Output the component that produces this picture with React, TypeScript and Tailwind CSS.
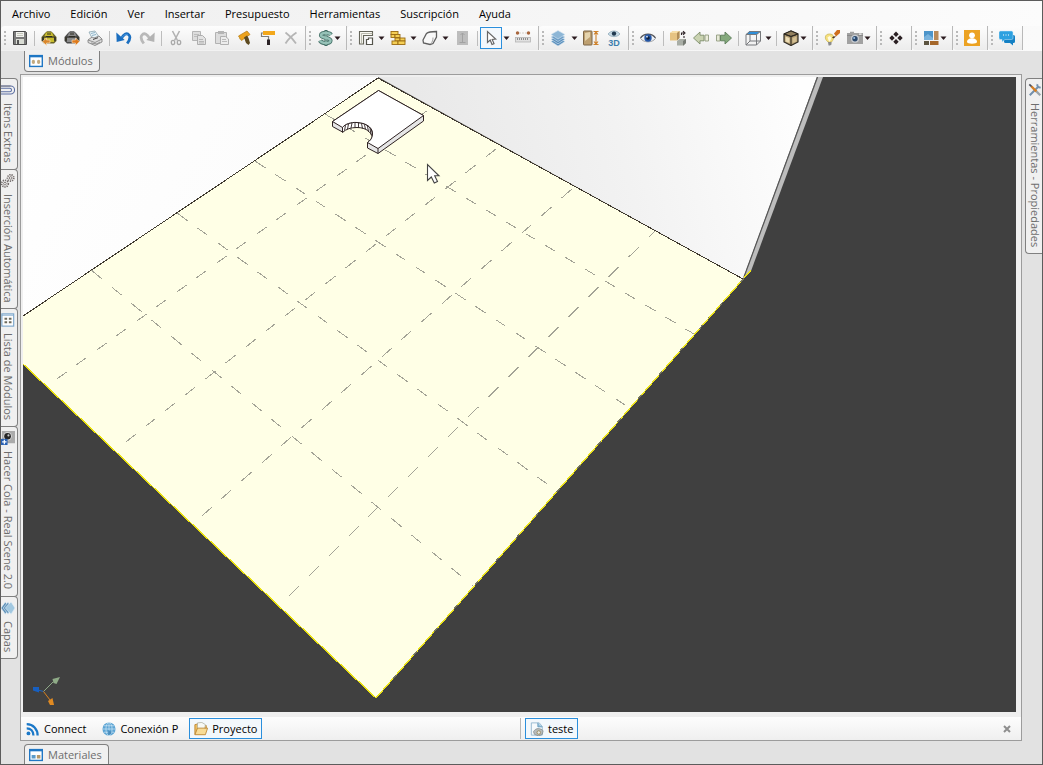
import React from "react";

type Art = () => React.ReactElement;

const Svg = ({ children, size = "size-4" }: { children: React.ReactNode; size?: string }) => (
  <svg viewBox="0 0 16 16" className={`${size} shrink-0`} fill="none" aria-hidden="true">
    {children}
  </svg>
);

/* ---------- toolbar icons ---------- */

const Save: Art = () => (
  <Svg>
    <path d="M1.5 1.500h12l1 1v12h-13z" fill="#7a7a7a" stroke="#4c4c4c" />
    <rect x="4" y="2" width="8" height="5" fill="#f1f1ee" />
    <path d="M5 3.500h6M5 5.500h6" stroke="#c3c6ba" />
    <rect x="4" y="9" width="8" height="5" fill="#d9dcd4" />
    <rect x="5" y="10" width="2" height="4" fill="#555" />
  </Svg>
);

const Backpack = ({ body, dark, arrow, flip }: { body: string; dark: string; arrow: string; flip?: boolean }) => (
  <Svg>
    <path d="M4 3l2-1.800h4L12 3l3.500 4v4L13 13.500H3L.5 11V7z" fill={dark} />
    <path d="M5 2.500h6l1.500 3.500h-9z" fill={body} />
    <path d="M3 8h10v4H3z" fill={body} />
    <path d="M6 4h4M5 6.500h6" stroke="#2f2d22" strokeWidth="1.200" />
    <path d="M1 7.500l2-1v4l-2 .5zM15 7.500l-2-1v4l2 .5z" fill="#3a382c" />
    <path
      d={flip ? "M15.500 11.500l-4-3.500v2H8v3h3.500v2.500z" : "M1.500 11.500l4-3.500v2H9v3H5.500v2.500z"}
      fill={arrow}
      stroke="#fbe3c4"
      strokeWidth=".6"
    />
  </Svg>
);
const PackIn: Art = () => <Backpack body="#c9bd2e" dark="#6a6526" arrow="#d9862b" />;
const PackOut: Art = () => <Backpack body="#8a8a8a" dark="#4b4b4b" arrow="#dd7a1c" flip />;

const Print: Art = () => (
  <Svg>
    <path d="M2 2l6-1 4 6-6 3z" fill="#e8f3f8" stroke="#8aa4b0" strokeWidth=".8" />
    <path d="M4 3.500l4-1M5 5.500l4-1" stroke="#78a5bd" strokeWidth=".8" />
    <path d="M1 10l4-3 2 1 5-2 3 3v3l-7 3.500-7-3z" fill="#dedede" stroke="#777" strokeWidth=".8" />
    <path d="M1 10l7 2.500L15 9M4 13l6 1 3-2" stroke="#888" strokeWidth=".9" />
    <path d="M6 9.500l5-1.800" stroke="#444" />
  </Svg>
);

const Undo: Art = () => (
  <Svg>
    <path d="M5 9.500C7 4 11 2.500 13 5c1.600 2 .5 5.500-1.800 8.500" stroke="#1b6fc0" strokeWidth="2.800" />
    <path d="M.3 2.500l.4 9.500 8-2z" fill="#1b6fc0" />
    <path d="M6 7.500C8 4.500 10.500 3.600 12 5" stroke="#4c9ae2" />
  </Svg>
);
const Redo: Art = () => (
  <Svg>
    <path d="M11 9.500C9 4 5 2.500 3 5c-1.600 2-.5 5.500 1.800 8.500" stroke="#b9b9b9" strokeWidth="2.800" />
    <path d="M15.700 2.500l-.4 9.500-8-2z" fill="#b3b3b3" />
  </Svg>
);
const Cut: Art = () => (
  <Svg>
    <path d="M4.500 1l5 9.500M11.500 1l-5 9.500" stroke="#b2b2b2" strokeWidth="1.600" />
    <ellipse cx="5" cy="12.500" rx="1.700" ry="2.100" stroke="#a9a9a9" strokeWidth="1.300" />
    <ellipse cx="11" cy="12.500" rx="1.700" ry="2.100" stroke="#a9a9a9" strokeWidth="1.300" />
  </Svg>
);
const Copy: Art = () => (
  <Svg>
    <path d="M1.500 1.500h8v9h-8z" fill="#ddd" stroke="#b5b5b5" />
    <path d="M3 4.500h5M3 6.500h3" stroke="#bdbdbd" />
    <path d="M6.500 5.500h5l3 3v6h-8z" fill="#e2e2e2" stroke="#aeaeae" />
    <path d="M8 9.500h4M8 11.500h5M8 13h5" stroke="#b7b7b7" />
  </Svg>
);
const Paste: Art = () => (
  <Svg>
    <path d="M1.500 2.500h11v11h-11z" fill="#ddd" stroke="#b2b2b2" />
    <path d="M4 1h6v3H4z" fill="#b5b5b5" />
    <path d="M6.500 6.500h5l3 2.500v5.500h-8z" fill="#ececec" stroke="#b0b0b0" />
    <path d="M8 9.500h4M8 11.500h5" stroke="#bbb" />
  </Svg>
);
const Brush: Art = () => (
  <Svg>
    <path d="M1.500 6L10 1l3 3.500-8.500 6z" fill="#eda21c" stroke="#b67a10" strokeWidth=".7" />
    <path d="M7 7.500l3-2 1.500 2.500L13 13l-1.500 2L9 13z" fill="#5d4a1f" />
    <path d="M1.500 6l3 4.500L2.500 9z" fill="#caa043" />
  </Svg>
);
const Roller: Art = () => (
  <Svg>
    <rect x="3" y="1" width="12" height="4" fill="#f3a81c" />
    <path d="M3 3H1.500v3.500h7V10" stroke="#7d7d7d" strokeWidth="1.200" />
    <path d="M7 9.500h3V15H7z" fill="#2a2226" />
  </Svg>
);
const Delete: Art = () => (
  <Svg>
    <path d="M2.500 2.500C6 5 10 9 13 13.500M13.500 2.500C9 5.500 5 9.500 2.500 13.500" stroke="#b5b5b5" strokeWidth="1.800" />
  </Svg>
);
const Dollar: Art = () => (
  <Svg>
    <path d="M9 0v16" stroke="#3f6a62" strokeWidth="3" />
    <path d="M14 4.800C12.500 2.500 4 2 4 5.300 4 8.500 13.500 7 13.500 10.700c0 3.300-9 3-10.500-.2" stroke="#4a756c" strokeWidth="4.200" />
    <path d="M9 1v14" stroke="#9cc3b4" />
    <path d="M14 4.800C12.500 2.500 4 2 4 5.300 4 8.500 13.500 7 13.500 10.700c0 3.300-9 3-10.500-.2" stroke="#96c2b8" strokeWidth="2.400" />
  </Svg>
);
const Walls: Art = () => (
  <Svg>
    <path d="M1.500 14V1.500h13v4h-9V14z" fill="#f8f8f2" stroke="#65655a" strokeWidth="1.100" />
    <path d="M3.500 14V3.500h11" stroke="#a9a99c" strokeWidth=".8" />
    <path d="M8.500 9.500h2v-1.500h4v6.500h-6z" fill="#fff" stroke="#55554c" strokeWidth="1.200" />
  </Svg>
);
const Bricks: Art = () => (
  <Svg>
    <g fill="#f5cf55" stroke="#9a6b12" strokeWidth=".9">
      <rect x="1" y="1.500" width="7" height="3" />
      <rect x="1" y="4.500" width="4" height="3" />
      <rect x="5" y="4.500" width="5" height="3" />
      <rect x="5" y="8" width="5" height="3" />
      <rect x="10" y="8" width="5" height="3" />
      <rect x="2" y="11" width="6" height="3.500" />
      <rect x="8" y="11" width="7" height="3.500" />
    </g>
  </Svg>
);
const Polygon: Art = () => (
  <Svg>
    <path d="M4.500 3.500C6 2 8 1.500 14.500 1.500v5.500l-3.500 6.500-3 1-6.500-1.500-.5-3z" fill="#f8f8f8" stroke="#5f5f5f" strokeWidth="1.300" />
    <path d="M8.500 14c2-2 2.500-4 2.500-6.500" stroke="#8a8a8a" strokeWidth=".8" />
  </Svg>
);
const Panel: Art = () => (
  <Svg>
    <rect x="3" y="1" width="11" height="14" fill="#bdbdbd" />
    <path d="M8.500 3v9M6.500 5l2-2 2 2M5.500 12.500h6" stroke="#a2a2a2" />
  </Svg>
);
const Pointer: Art = () => (
  <Svg>
    <path d="M4.500 1.500v11l2.700-2.500 1.800 4.500 2-.9-1.800-4.100 3.500-.5z" fill="#fff" stroke="#666" strokeWidth="1.200" />
  </Svg>
);
const Ruler: Art = () => (
  <Svg>
    <circle cx="2.500" cy="3" r="1.700" fill="#a9663d" />
    <circle cx="13.500" cy="3" r="1.700" fill="#a9663d" />
    <path d="M4.500 3h1M7.500 3h1M10.500 3h1" stroke="#b5a99d" />
    <rect x=".5" y="7.500" width="15" height="4.500" fill="#e0e0e0" stroke="#b4b4b4" strokeWidth=".8" />
    <path d="M2.500 8v2M4.500 8v2M6.500 8v2M8.500 8v2M10.500 8v2M12.500 8v2" stroke="#777" strokeWidth=".8" />
  </Svg>
);
const Layers: Art = () => (
  <Svg>
    <g stroke="#d5e5f1" strokeWidth=".6">
      <path d="M1 11.500L8 8l7 3.500L8 16z" fill="#5b8fbc" />
      <path d="M1 9.300l7-3.500 7 3.500-7 4.500z" fill="#5b8fbc" />
      <path d="M1 7l7-3.500L15 7l-7 4.500z" fill="#6b9cc6" />
      <path d="M1 4.500L8 .5l7 4L8 9z" fill="#8db6d6" />
    </g>
  </Svg>
);
const DoorHeight: Art = () => (
  <Svg>
    <rect x=".5" y="1" width="8.500" height="14" rx=".6" fill="#bd9f70" stroke="#7b6547" />
    <path d="M2 3l5-1v5L2 11z" fill="#e4d3ad" />
    <path d="M10.500 1.500h5M10.500 14.500h5M13 2v12M11 4.500l2-2.500 2 2.500M11 11.500l2 2.500 2-2.500" stroke="#cf832e" strokeWidth="1.100" />
  </Svg>
);
const View3D: Art = () => (
  <Svg>
    <path d="M2 4c3-4 9-4 12 0-3 3.500-9 3.500-12 0z" fill="#c6d9e4" stroke="#86a3b5" strokeWidth=".7" />
    <circle cx="8" cy="3.600" r="2.200" fill="#20394f" />
    <text x="8" y="15.500" textAnchor="middle" className="fill-[#3b7fae] font-['Liberation_Sans',sans-serif] text-[9px] font-bold">3D</text>
  </Svg>
);
const Eye: Art = () => (
  <Svg>
    <path d="M.5 8.500C4 3 12 3 15.500 8.500 12 13 4 13 .5 8.500z" fill="#eef1f5" stroke="#8d8f94" strokeWidth=".8" />
    <path d="M.5 7.800C4 2.800 12 2.800 15.500 7.800" stroke="#55565c" strokeWidth="1.300" />
    <circle cx="8" cy="8" r="3.700" fill="#2456a6" />
    <circle cx="8" cy="8" r="1.800" fill="#10203c" />
    <circle cx="7" cy="6.700" r=".9" fill="#d8e6fa" />
  </Svg>
);
const Cubes: Art = () => (
  <Svg>
    <path d="M0 3l3-2h6.500v7L7 10.500H0z" fill="#e6c382" />
    <path d="M0 3h7l2.500-2H3z" fill="#f7dfa9" />
    <path d="M7 3l2.500-2v7L7 10.500z" fill="#b08d58" />
    <path d="M7 11l2.500-2H16v4l-2.500 2.500H7z" fill="#a9aea6" />
    <path d="M13 11l3-2v4l-2.500 2.500H13z" fill="#757a73" />
    <path d="M11.500 5V3h2.500M13 1.200l2 1.800-2 1.800M14 6v2" stroke="#30262a" strokeWidth="1.100" />
  </Svg>
);
const Prev: Art = () => (
  <Svg>
    <path d="M.5 8l6.500-6v3.200h4v5.600H7V14z" fill="#c9d2b0" stroke="#7d8d6b" strokeWidth=".9" />
    <path d="M12 5h3.500v6H12z" fill="#eceddc" stroke="#929c80" strokeWidth=".9" />
  </Svg>
);
const Next: Art = () => (
  <Svg>
    <path d="M.5 5H4v6H.5z" fill="#e7ead8" stroke="#929c80" strokeWidth=".9" />
    <path d="M15.500 8L9 2v3.200H4.500v5.600H9V14z" fill="#84a97c" stroke="#5c7c59" strokeWidth=".9" />
  </Svg>
);
const WireCube: Art = () => (
  <Svg>
    <path d="M4.500 1h11L12 4.500H1z" fill="#2f8ed8" />
    <path d="M1 4.500h10.500v10.500H1zM11.500 15l4-4V1.500l-4 3M1 15l4-4h10.500M5 11V4.500M1 4.500l4-3h10.500" stroke="#77797c" />
  </Svg>
);
const SolidCube: Art = () => (
  <Svg>
    <path d="M1 4l7-3 7 3v8l-7 3.500L1 12z" fill="#b29c72" stroke="#2e2a22" strokeWidth="1.200" />
    <path d="M1 4l7-3 7 3-7 2.500z" fill="#93815f" stroke="#2e2a22" />
    <path d="M8 6.500v9M1 4l7 2.500L15 4" stroke="#2e2a22" strokeWidth="1.100" />
    <path d="M2.500 6.500l4 1.400V13l-4-1.500z" fill="#ecdcb4" />
    <path d="M9.500 8l4-1.500v5l-4 1.500z" fill="#d3bf92" />
  </Svg>
);
const BulbBrush: Art = () => (
  <Svg>
    <path d="M4 12C0 9 .5 4 5.500 4c4.500 0 5.500 4 2 8z" fill="#f6e07c" stroke="#cdb95c" strokeWidth=".8" />
    <path d="M3.500 7.500l2-1.500 2 1.500L6 11.500H5z" fill="#fffbe0" />
    <path d="M4 12h3.500v2.500l-1.500 1H4.500z" fill="#8a8a8a" />
    <path d="M9 6.500L8 8l2 .3 2-2z" fill="#4a3322" />
    <path d="M10 3.500L13 0h3v3l-4 3.500z" fill="#cf6f1c" />
  </Svg>
);
const Camera: Art = () => (
  <Svg>
    <path d="M0 3h3V1.800h4V3h9v11H0z" fill="#a2a2a2" />
    <path d="M0 5.500h16" stroke="#8a8a8a" />
    <circle cx="8" cy="8.800" r="4" fill="#c9cdd2" />
    <circle cx="8" cy="8.800" r="2.700" fill="#2d4a6d" />
    <circle cx="7.200" cy="8" r="1" fill="#9cc2e8" />
    <rect x="12" y="3.500" width="2.500" height="1.300" fill="#eee" />
  </Svg>
);
const Diamonds: Art = () => (
  <Svg>
    <path d="M8 1.500l2.700 2.700L8 6.900 5.300 4.200zM4 5.300L6.700 8 4 10.700 1.300 8zM12 5.300L14.700 8 12 10.700 9.300 8zM8 9.100l2.700 2.700L8 14.500l-2.700-2.700z" fill="#2b2023" />
  </Svg>
);
const Materials: Art = () => (
  <Svg>
    <rect x="1" y="1" width="9" height="9" fill="#4c94c9" />
    <rect x="11" y="1" width="4.500" height="9" fill="#b98a58" />
    <rect x="1" y="11" width="5" height="4" fill="#5c5440" />
    <rect x="7" y="11" width="8.500" height="4" fill="#a5672a" />
    <path d="M1 7l4-3 5 4v2H1z" fill="#79b2dc" />
  </Svg>
);
const User: Art = () => (
  <Svg>
    <rect width="16" height="16" fill="#eca222" />
    <circle cx="8" cy="5.300" r="2.900" fill="#fff" />
    <path d="M3 12c0-5 10-5 10 0 0 2.300-10 2.300-10 0z" fill="#fff" />
  </Svg>
);
const Chat: Art = () => (
  <Svg>
    <path d="M5 5h9.500q1.500 0 1.500 1.500v5q0 1.500-1.500 1.500H14v2.500L11 13H6.500Q5 13 5 11.500z" fill="#1480c4" />
    <path d="M1.500 1h11Q14 1 14 2.500v5.500q0 1.500-1.500 1.500H6L3 12V9.500H1.500Q0 9.500 0 8V2.500Q0 1 1.500 1z" fill="#2ba0e0" stroke="#c9e7f8" strokeWidth=".5" />
    <path d="M4 5h1M6.500 5h1M9 5h1" stroke="#fff" />
  </Svg>
);

/* ---------- tab icons ---------- */

const Window: Art = () => (
  <Svg size="size-3.5">
    <rect x=".8" y="1.800" width="14.400" height="12.400" fill="#fff" stroke="#2077c4" strokeWidth="1.600" />
    <path d="M1 3h14" stroke="#2077c4" strokeWidth="1.600" />
    <ellipse cx="5" cy="9" rx="1.900" ry="2.300" fill="#c3aa80" />
    <ellipse cx="11" cy="9" rx="1.900" ry="2.300" fill="#c3aa80" />
  </Svg>
);
const MaterialWindow: Art = () => (
  <Svg size="size-3.5">
    <rect x=".8" y="1.800" width="14.400" height="12.400" fill="#fff" stroke="#2077c4" strokeWidth="1.600" />
    <path d="M1 3h14" stroke="#2077c4" strokeWidth="1.600" />
    <rect x="3" y="8" width="4.500" height="4" fill="#5b9bc9" />
    <rect x="9" y="8" width="4" height="4" fill="#b5986a" />
  </Svg>
);
const Clip: Art = () => (
  <Svg size="size-3.5">
    <path d="M0 3.500h11a3.700 3.700 0 010 9H0M0 6h10a2 2 0 010 4H0" stroke="#5c6fa3" strokeWidth="1.200" />
    <path d="M0 3.500h11" stroke="#77777f" />
  </Svg>
);
const Gears: Art = () => (
  <Svg size="size-3.5">
    <g stroke="#77706f" strokeWidth="2" strokeDasharray="1.500 1">
      <circle cx="11" cy="4.500" r="3.600" />
      <circle cx="4.500" cy="11" r="3.800" />
    </g>
    <circle cx="11" cy="4.500" r="1.500" stroke="#77706f" />
    <circle cx="4.500" cy="11" r="1.500" stroke="#77706f" />
  </Svg>
);
const ListIcon: Art = () => (
  <Svg size="size-3.5">
    <rect x="1" y="1" width="13.500" height="14" fill="#fdfdfd" stroke="#7ba6cc" strokeWidth="1.300" />
    <path d="M1 2.500h13" stroke="#7ba6cc" />
    <path d="M4 6.500h3M9 6.500h3M4 10.500h3M9 10.500h3" stroke="#6d6a5c" strokeWidth="2.400" />
  </Svg>
);
const CameraPlus: Art = () => (
  <Svg size="size-3.5">
    <rect x="1" y="0" width="15" height="14" fill="#ababab" />
    <circle cx="7.500" cy="6" r="4.800" fill="#dadada" />
    <circle cx="7.500" cy="6" r="3.800" fill="#262626" />
    <circle cx="8.500" cy="5" r="1.200" fill="#ccc" />
    <rect x="0" y="9" width="7.500" height="7" fill="#2a62b4" />
    <path d="M3.800 10v5M1.300 12.500h5" stroke="#fff" strokeWidth="1.400" />
  </Svg>
);
const SideLayers: Art = () => (
  <Svg size="size-3.5">
    <g stroke="#e3eef6" strokeWidth=".7">
      <path d="M5 1l-5 7 5 7 4-7z" fill="#5b8eb6" />
      <path d="M8 1L2.500 8 8 15l4-7z" fill="#6b9bc0" />
      <path d="M11.500 1L5 8l6.500 7L16 8z" fill="#a2c8e0" />
    </g>
  </Svg>
);
const Tools: Art = () => (
  <Svg size="size-3.5">
    <path d="M2 14L12 4M11 1.500c-1 2 .5 4 3.500 3.500" stroke="#7390ac" strokeWidth="2.300" />
    <path d="M9 9l5 5" stroke="#9aa3aa" strokeWidth="2.600" />
    <path d="M1.500 1.500L4.500 4.500" stroke="#4f4f57" strokeWidth="2" />
    <path d="M4 4l5.500 5.500" stroke="#d57e23" strokeWidth="2.800" />
  </Svg>
);
const Rss: Art = () => (
  <Svg size="size-3.5">
    <circle cx="2.800" cy="13" r="2.200" fill="#1b78c8" />
    <path d="M.8 7.200c4.500 0 7.700 3.500 7.700 8.300M.8 2.500c7.500 0 12.500 5.500 12.500 13" stroke="#1b78c8" strokeWidth="2.600" />
  </Svg>
);
const Globe: Art = () => (
  <Svg size="size-3.5">
    <circle cx="8" cy="8" r="7.500" fill="#5ba4d4" />
    <ellipse cx="8" cy="8" rx="3.500" ry="7.500" stroke="#cfe7f5" strokeWidth=".8" />
    <path d="M8 .5v15M.5 8h15M2 4.300h12M2 11.700h12" stroke="#cfe7f5" strokeWidth=".8" />
    <path d="M7 9l4 2-1 3-3 1z" fill="#4a8dbd" />
  </Svg>
);
const Folder: Art = () => (
  <Svg size="size-3.5">
    <path d="M1 14V3l4-1 1 2h8v3z" fill="#eebf62" stroke="#bd8631" />
    <path d="M4 1l5-.5L13 3l-1 6H4z" fill="#f7f9f5" stroke="#a9ab9c" strokeWidth=".8" />
    <path d="M1 14.500L4 7h11.500L13 14.500z" fill="#f9dc96" stroke="#bd8631" />
  </Svg>
);
const Doc: Art = () => (
  <Svg size="size-3.5">
    <path d="M1.500 1h9L14 5v10H1.500z" fill="#f6fafc" stroke="#8fb5cd" />
    <path d="M9 1v4.500h5" fill="#9bc3dc" stroke="#5c96bb" />
    <path d="M4 11c3-5 8-4 11-1l-1 4-4 2-5-2z" fill="#b7bbbb" stroke="#808585" strokeWidth=".8" />
    <circle cx="10" cy="12" r="2" fill="#e4e6e3" stroke="#85702f" strokeWidth=".7" />
  </Svg>
);

/* ---------- tool bar parts ---------- */

const Caret = () => (
  <svg viewBox="0 0 7 6" className="h-1.5 w-[7px] shrink-0" aria-hidden="true">
    <path d="M.5 1.500h6L3.500 5z" fill="#2b1b1f" />
  </svg>
);

const Tool = ({ label, art: A, wide }: { label: string; art: Art; wide?: boolean }) => (
  <button type="button" aria-label={label} className={`flex h-[22px] items-center justify-center ${wide ? "w-6" : "w-[23px]"}`}>
    <A />
  </button>
);
const MenuTool = ({ label, art: A }: { label: string; art: Art }) => (
  <button type="button" aria-label={label} className="flex h-[22px] w-[30px] items-center gap-px pl-1">
    <A />
    <Caret />
  </button>
);
const Drop = ({ label }: { label: string }) => (
  <button type="button" aria-label={label} className="flex h-[22px] w-[9px] items-center justify-center">
    <Caret />
  </button>
);
const Sep = () => <span className="mr-[2px] ml-[3px] h-[15px] w-px bg-[#bdbdbd]" />;

const Group = ({ name, children }: { name: string; children: React.ReactNode }) => (
  <div
    role="group"
    aria-label={name}
    className="flex h-6 items-center rounded-l border-r border-[#b9b9b9] bg-linear-to-b from-[#fdfdfd] to-[#ececec] pr-[3px]"
  >
    <span className="flex w-[7px] flex-col items-center gap-[2px]">
      <i className="size-[2px] bg-[#b9b9b9]" />
      <i className="size-[2px] bg-[#b9b9b9]" />
      <i className="size-[2px] bg-[#b9b9b9]" />
      <i className="size-[2px] bg-[#b9b9b9]" />
    </span>
    {children}
  </div>
);

const menus = ["Archivo", "Edición", "Ver", "Insertar", "Presupuesto", "Herramientas", "Suscripción", "Ayuda"];

const sideTabs: { label: string; art: Art }[] = [
  { label: "Itens Extras", art: Clip },
  { label: "Inserción Automática", art: Gears },
  { label: "Lista de Módulos", art: ListIcon },
  { label: "Hacer Cola - Real Scene 2.0", art: CameraPlus },
  { label: "Capas", art: SideLayers },
];

/* ---------- 3D scene ---------- */

const gridLines = [
  [325, 114, 694, 334],
  [255, 161, 625, 405],
  [177, 213, 547, 484],
  [91, 270, 473, 586],
  [56, 379, 427, 110],
  [125, 442, 495, 149],
  [201, 516, 571, 189],
  [288, 596, 654, 231],
];

const Scene = () => (
  <svg
    viewBox="23 77 993 635"
    preserveAspectRatio="xMinYMin slice"
    className="min-h-0 w-full flex-1 bg-[#404040]"
    role="img"
    aria-label="Vista 3D"
  >
    <defs>
      <linearGradient id="wallLeft" x1="0" y1="0" x2="1" y2="0.4">
        <stop offset="0" stopColor="#ffffff" />
        <stop offset="1" stopColor="#fbfbfb" />
      </linearGradient>
      <linearGradient id="wallRight" gradientUnits="userSpaceOnUse" x1="430" y1="150" x2="790" y2="60">
        <stop offset="0" stopColor="#e9e9e9" />
        <stop offset="0.5" stopColor="#f2f2f2" />
        <stop offset="1" stopColor="#fefefe" />
      </linearGradient>
    </defs>
    <path d="M23 77H378V79L23 317z" fill="url(#wallLeft)" />
    <path d="M378 77H817L743 279z" fill="url(#wallRight)" />
    <path d="M817 77H823L751 271L743 279z" fill="#bdbdbd" />
    <path d="M817.500 77L744 277" stroke="#555" strokeWidth="1.200" />
    <path d="M378 78L743 279L751 270L376 698L23 364V316z" fill="#ffffe6" />
    <g shapeRendering="crispEdges" fill="none">
      <path d="M23 316L378 78L743 279" stroke="#403a30" />
      <path d="M23 364L376 698" stroke="#e8e010" strokeWidth="1.300" />
      <path d="M376 698L751 270" stroke="#77775a" strokeWidth="1.300" />
      <path d="M376 698L751 270" stroke="#ebe31c" strokeWidth="1.300" strokeDasharray="26 5" />
    </g>
    <g shapeRendering="crispEdges" transform="translate(0.5 0.3)">
      {gridLines.map(([x1, y1, x2, y2]) => {
        const dash = (10 * Math.hypot(x2 - x1, y2 - y1)) / (x2 - x1);
        return <line key={`${x1}-${y1}`} x1={x1} y1={y1} x2={x2} y2={y2} stroke="#a3a396" strokeDasharray={dash} />;
      })}
    </g>
    <g stroke="#2e2222" strokeLinejoin="round">
      <path d="M378.500 90.500L423.500 115.500V121L378 153.500L367.500 148V142.500C378 136 374 125 357 123C349 122.500 345 125 342.500 128V132L332.500 126.500V121.500z" fill="#e6e6e6" />
      <path d="M342.500 127.500C345 124 351 122 357 122.500C368 123 373.500 129 372.500 138C371.500 132 366 127.500 357 127.500C351 127.500 346 129 342.500 132.500z" fill="#fff" />
      <path d="M378.500 90.500L423.500 115.500L378 148.500L367.500 142.500C370 141 372.500 138 372.500 134C373 129 368 123 357 122.500C351 122 345 124 342.500 127.500L332.500 121.500z" fill="#fff" />
      <path d="M378 148.500V153.500" />
      <path d="M345.500 125.500l-1 5M348.500 124l-1 5M352 123l-1 5M355 122.500v5M358.500 122.500v5M361.500 123.500l1 5M364.500 124.500l1 5M367.500 126l1 6M370 128.500l1 6" strokeWidth=".9" fill="none" />
    </g>
    <path d="M427.500 164.500V180.500L431.300 177L434.300 183L437.500 181.500L434.700 175.800H439z" fill="#fff" stroke="#444" strokeWidth="1.100" />
    <g strokeWidth="1">
      <path d="M43.500 691.500L53 682" stroke="#8fa988" />
      <path d="M60 677l-7.500 2 1 4 3 1z" fill="#8fab87" />
      <path d="M43.500 691.500L38 690" stroke="#1a63c0" />
      <path d="M33 687h6v5.500l-3-1-3-1z" fill="#175fc0" />
      <path d="M43.500 691.500L50 700" stroke="#d8801e" />
      <path d="M48 701l4.500-3L54 705h-4z" fill="#e08a22" />
    </g>
  </svg>
);

export default function App() {
  return (
    <div className="flex h-screen min-h-[720px] flex-col overflow-hidden border border-[#5c5c5c] bg-[#e2e2e2] font-['Open_Sans','Noto_Sans',sans-serif] text-[11px] leading-4 text-black">
      <nav aria-label="Menú principal" className="flex h-[25px] shrink-0 items-center gap-5 bg-linear-to-r from-[#efefef] to-[#fcfcfc] pl-[11px]">
        {menus.map((m) => (
          <button key={m} type="button">
            {m}
          </button>
        ))}
      </nav>

      <div role="toolbar" aria-label="Herramientas" className="flex h-[25px] shrink-0 items-start bg-linear-to-r from-[#f0f0f0] to-[#fafafa]">
        <Group name="Archivo">
          <Tool label="Guardar" art={Save} />
          <Sep />
          <Tool label="Importar módulo" art={PackIn} />
          <Tool label="Exportar módulo" art={PackOut} />
          <Tool label="Imprimir" art={Print} />
          <Sep />
          <Tool label="Deshacer" art={Undo} />
          <Tool label="Rehacer" art={Redo} />
          <Sep />
          <Tool label="Cortar" art={Cut} />
          <Tool label="Copiar" art={Copy} />
          <Tool label="Pegar" art={Paste} />
          <Tool label="Pincel" art={Brush} />
          <Tool label="Rodillo" art={Roller} />
          <Tool label="Eliminar" art={Delete} />
        </Group>
        <Group name="Presupuesto">
          <MenuTool label="Presupuesto" art={Dollar} />
        </Group>
        <Group name="Construcción">
          <Tool label="Paredes" art={Walls} />
          <Drop label="Opciones de paredes" />
          <Tool label="Ladrillos" art={Bricks} />
          <Drop label="Opciones de ladrillos" />
          <Tool label="Polígono" art={Polygon} />
          <Drop label="Opciones de polígono" />
          <Tool label="Panel" art={Panel} wide />
          <Sep />
          <button type="button" aria-label="Seleccionar" aria-pressed="true" className="flex size-[22px] items-center justify-center border border-[#2b8fdc] bg-[#f3f8fc]">
            <Pointer />
          </button>
          <Drop label="Opciones de selección" />
          <Tool label="Medir" art={Ruler} wide />
        </Group>
        <Group name="Capas">
          <Tool label="Capas" art={Layers} wide />
          <Drop label="Opciones de capas" />
          <Tool label="Altura" art={DoorHeight} />
          <Tool label="Vista 3D" art={View3D} />
        </Group>
        <Group name="Vista">
          <Tool label="Ver" art={Eye} wide />
          <Sep />
          <Tool label="Objetos" art={Cubes} />
          <Tool label="Anterior" art={Prev} />
          <Tool label="Siguiente" art={Next} />
          <Sep />
          <Tool label="Caras" art={WireCube} />
          <Drop label="Opciones de caras" />
          <Sep />
          <MenuTool label="Sólido" art={SolidCube} />
        </Group>
        <Group name="Imagen">
          <Tool label="Iluminación" art={BulbBrush} />
          <MenuTool label="Cámara" art={Camera} />
        </Group>
        <Group name="Componentes">
          <Tool label="Componentes" art={Diamonds} wide />
        </Group>
        <Group name="Materiales">
          <MenuTool label="Materiales" art={Materials} />
        </Group>
        <Group name="Cuenta">
          <Tool label="Usuario" art={User} wide />
        </Group>
        <Group name="Soporte">
          <Tool label="Chat" art={Chat} wide />
        </Group>
      </div>

      <div className="flex h-[23px] shrink-0 items-start pl-[23px]">
        <button type="button" className="flex h-[21px] items-center gap-[5px] rounded-b border border-t-0 border-[#808080] bg-[#f0f0f0] pr-1.5 pl-1 text-[#6d6d6d]">
          <Window />
          Módulos
        </button>
      </div>

      <div className="flex min-h-0 flex-1">
        <div className="flex w-[19px] shrink-0 flex-col items-start pt-1">
          {sideTabs.map(({ label, art: A }) => (
            <button
              key={label}
              type="button"
              className="-mb-px flex w-[17px] items-center gap-[6px] rounded-r border border-l-0 border-[#808080] bg-[#f0f0f0] pt-1 pr-[2px] pb-[6px] text-[#6d6d6d] [writing-mode:vertical-rl]"
            >
              <A />
              {label}
            </button>
          ))}
        </div>

        <main className="flex min-w-0 flex-1 flex-col border border-[#9c9c9c] bg-[#efefef]">
          <div className="flex min-h-0 flex-1 flex-col pt-[2px] pr-[5px] pb-[5px] pl-[2px]">
            <Scene />
          </div>
          <div className="flex h-[23px] shrink-0 items-center bg-linear-to-b from-[#fdfdfd] to-[#efefef] pr-2">
            <div className="flex w-[500px] shrink-0 items-center gap-1.5 border-r border-[#b9b9b9]">
              <button type="button" className="flex h-[21px] items-center gap-1 px-[5px]">
                <Rss />
                Connect
              </button>
              <button type="button" className="flex h-[21px] items-center gap-1 px-[5px]">
                <Globe />
                Conexión P
              </button>
              <button type="button" aria-pressed="true" className="flex h-[21px] items-center gap-1 border border-[#2b8fdc] bg-[#f3f8fc] px-1">
                <Folder />
                Proyecto
              </button>
            </div>
            <button type="button" aria-pressed="true" className="ml-1 flex h-[21px] items-center gap-1 border border-[#2b8fdc] bg-[#f3f8fc] px-1">
              <Doc />
              teste
            </button>
            <button type="button" aria-label="Cerrar" className="ml-auto flex size-3 items-center justify-center">
              <svg viewBox="0 0 8 8" className="size-2" aria-hidden="true">
                <path d="M1 1l6 6M7 1L1 7" stroke="#8e8e8e" strokeWidth="2" />
              </svg>
            </button>
          </div>
        </main>

        <div className="flex w-5 shrink-0 flex-col items-end pt-1">
          <button
            type="button"
            className="flex w-[17px] items-center gap-[6px] rounded-l border border-r-0 border-[#808080] bg-[#f0f0f0] pt-1 pb-[6px] pl-px text-[#6d6d6d] [writing-mode:vertical-rl]"
          >
            <Tools />
            Herramientas - Propiedades
          </button>
        </div>
      </div>

      <div className="flex h-[23px] shrink-0 items-end pl-[23px]">
        <button type="button" className="flex h-5 items-center gap-[5px] rounded-t border border-b-0 border-[#808080] bg-[#f0f0f0] pr-1.5 pl-1 text-[#6d6d6d]">
          <MaterialWindow />
          Materiales
        </button>
      </div>
    </div>
  );
}
